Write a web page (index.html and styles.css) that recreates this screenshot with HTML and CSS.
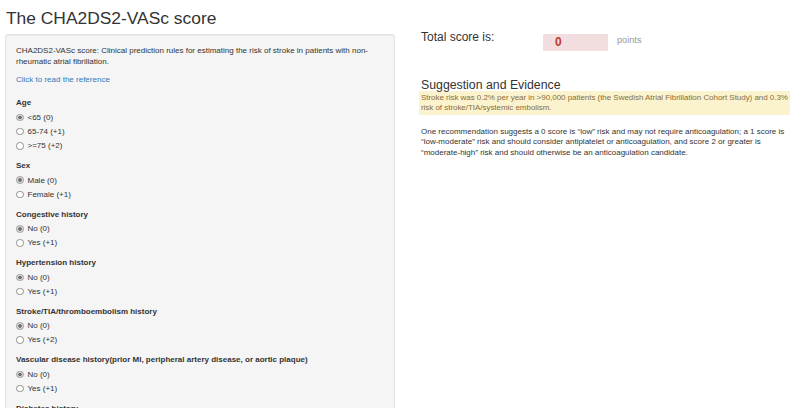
FILE: index.html
```html
<!DOCTYPE html>
<html lang="en">
<head>
<meta charset="utf-8">
<title>The CHA2DS2-VASc score</title>
<link rel="stylesheet" href="styles.css">
</head>
<body>
<div class="page">
  <div class="side">
    <h2 class="title">The CHA2DS2-VASc score</h2>
    <div class="well">
      <p class="intro">CHA2DS2-VASc score: Clinical prediction rules for estimating the risk of stroke in patients with non-rheumatic atrial fibrillation.</p>
      <p class="ref"><a href="#">Click to read the reference</a></p>
      <div class="groups">
        <div class="form-group">
          <div class="control-label">Age</div>
          <label class="radio"><input type="radio" name="age" checked><span>&lt;65 (0)</span></label>
          <label class="radio"><input type="radio" name="age"><span>65-74 (+1)</span></label>
          <label class="radio"><input type="radio" name="age"><span>&gt;=75 (+2)</span></label>
        </div>
        <div class="form-group">
          <div class="control-label">Sex</div>
          <label class="radio"><input type="radio" name="sex" checked><span>Male (0)</span></label>
          <label class="radio"><input type="radio" name="sex"><span>Female (+1)</span></label>
        </div>
        <div class="form-group">
          <div class="control-label">Congestive history</div>
          <label class="radio"><input type="radio" name="chf" checked><span>No (0)</span></label>
          <label class="radio"><input type="radio" name="chf"><span>Yes (+1)</span></label>
        </div>
        <div class="form-group">
          <div class="control-label">Hypertension history</div>
          <label class="radio"><input type="radio" name="htn" checked><span>No (0)</span></label>
          <label class="radio"><input type="radio" name="htn"><span>Yes (+1)</span></label>
        </div>
        <div class="form-group">
          <div class="control-label">Stroke/TIA/thromboembolism history</div>
          <label class="radio"><input type="radio" name="stroke" checked><span>No (0)</span></label>
          <label class="radio"><input type="radio" name="stroke"><span>Yes (+2)</span></label>
        </div>
        <div class="form-group">
          <div class="control-label">Vascular disease history(prior MI, peripheral artery disease, or aortic plaque)</div>
          <label class="radio"><input type="radio" name="vasc" checked><span>No (0)</span></label>
          <label class="radio"><input type="radio" name="vasc"><span>Yes (+1)</span></label>
        </div>
        <div class="form-group">
          <div class="control-label">Diabetes history</div>
          <label class="radio"><input type="radio" name="dm" checked><span>No (0)</span></label>
          <label class="radio"><input type="radio" name="dm"><span>Yes (+1)</span></label>
        </div>
      </div>
    </div>
  </div>
  <div class="main">
    <div class="score-row">
      <div class="score-label">Total score is:</div>
      <div class="score-box">0</div>
      <div class="score-unit">points</div>
    </div>
    <h3 class="sub">Suggestion and Evidence</h3>
    <div class="evidence">Stroke risk was 0.2% per year in &gt;90,000 patients (the Swedish Atrial Fibrillation Cohort Study) and 0.3% risk of stroke/TIA/systemic embolism.</div>
    <p class="advice">One recommendation suggests a 0 score is “low” risk and may not require anticoagulation; a 1 score is “low-moderate” risk and should consider antiplatelet or anticoagulation, and score 2 or greater is “moderate-high” risk and should otherwise be an anticoagulation candidate.</p>
  </div>
</div>
</body>
</html>
```

FILE: styles.css
```css
html, body {
  margin: 0;
  padding: 0;
  background: #ffffff;
}

body {
  font-family: "Liberation Sans", Helvetica, Arial, sans-serif;
  font-size: 8px;
  line-height: 11.43px;
  color: #333333;
  overflow: hidden;
}

.page {
  display: flex;
  align-items: flex-start;
  padding: 0 5px;
}

.side {
  width: 390px;
  flex: none;
}

.title {
  margin: 9px 0 0 1px;
  font-size: 17.4px;
  line-height: 19px;
  font-weight: normal;
  color: #333333;
  height: 25px;
}

.well {
  background: #f5f5f5;
  border: 1px solid #e3e3e3;
  border-radius: 3px;
  box-shadow: inset 0 1px 1px rgba(0, 0, 0, 0.05);
  padding: 10px;
  min-height: 500px;
}

.intro {
  margin: 0 0 5.7px;
  padding-right: 16px;
}

.ref {
  margin: 0 0 12.4px;
}

.ref a {
  color: #337ab7;
  text-decoration: none;
}

.groups {
  display: flex;
  flex-direction: column;
  gap: 8.57px;
}

.form-group {
  display: flex;
  flex-direction: column;
  gap: 2.86px;
}

.control-label {
  font-weight: bold;
  height: 11.43px;
}

.radio {
  display: flex;
  align-items: center;
  height: 11.43px;
  gap: 4px;
}

.radio input {
  appearance: none;
  -webkit-appearance: none;
  margin: 0;
  width: 7.5px;
  height: 7.5px;
  border: 1px solid #8f8f8f;
  border-radius: 50%;
  background: #ffffff;
  box-sizing: border-box;
  flex: none;
}

.radio input:checked {
  background: radial-gradient(circle, #6d6d6d 0 1.5px, #d4d4d4 1.9px);
  border-color: #a0a0a0;
}

.main {
  flex: 1;
  padding: 29.5px 5px 0 26px;
}

.score-row {
  display: flex;
  align-items: flex-start;
}

.score-label {
  width: 122px;
  font-size: 12px;
  line-height: 15px;
}

.score-box {
  width: 53px;
  height: 17px;
  padding-left: 12px;
  margin-top: 4.5px;
  background: #f2dede;
  color: #c0392b;
  font-weight: bold;
  font-size: 12px;
  line-height: 17px;
}

.score-unit {
  margin-left: 9px;
  margin-top: 3.7px;
  color: #999999;
  font-size: 9.2px;
  line-height: 15px;
}

.sub {
  margin: 27.5px 0 0 0;
  font-size: 12.3px;
  line-height: 12px;
  font-weight: normal;
  color: #333333;
}

.evidence {
  background: #fbf3cd;
  color: #8a6d3b;
  padding: 2px 0 1px 2px;
  margin-left: -2px;
  line-height: 10.8px;
  letter-spacing: -0.04px;
}

.advice {
  margin: 11.8px 0 0;
  line-height: 10.5px;
}
```
